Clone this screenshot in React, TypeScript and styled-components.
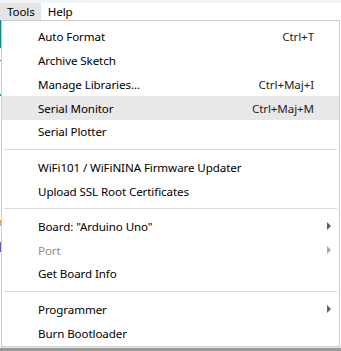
import React from "react";
import styled, { createGlobalStyle } from "styled-components";

const Global = createGlobalStyle`
  html, body { margin: 0; padding: 0; background: #ffffff; }
  body { font-family: "Noto Sans", "Open Sans", sans-serif; }
`;

const Screen = styled.div`
  position: relative;
  width: 341px;
  height: 351px;
  overflow: hidden;
  background: #ffffff;
  display: flex;
  flex-direction: column;
`;

const MenuBar = styled.div`
  height: 17px;
  border-top: 3px solid #f1f3f8;
  background: #ffffff;
  display: flex;
  align-items: stretch;
  flex-shrink: 0;
`;

const BarItem = styled.div<{ $active?: boolean }>`
  padding: 0 6px 0 7px;
  display: flex;
  align-items: center;
  font-size: 11.6px;
  letter-spacing: -0.1px;
  color: #000;
  background: ${(p) => (p.$active ? "#e5e5e5" : "transparent")};
`;

const Editor = styled.div`
  flex: 1;
  display: flex;
  flex-direction: column;
  background: #ffffff;
`;

const EditorMain = styled.div`
  flex: 1;
  display: flex;
`;

const Gutter = styled.div`
  width: 1px;
  background: linear-gradient(
    to bottom,
    #0d8a8a 0px,
    #0d8a8a 28px,
    #ffffff 28px,
    #ffffff 40px,
    #777 40px,
    #777 41px,
    #fff 41px,
    #fff 74px,
    #1a9a9a 74px,
    #1a9a9a 76px,
    #fff 76px,
    #fff 200px,
    #e0a060 200px,
    #e0a060 206px,
    #fff 206px,
    #fff 222px,
    #5a60b0 222px,
    #5a60b0 232px,
    #fff 232px
  );
`;

const StatusStrip = styled.div`
  height: 3px;
  border-top: 1px solid #e8e8e8;
  background: #9a9a9a;
`;

const Dropdown = styled.div`
  position: absolute;
  top: 20px;
  left: 1px;
  width: 337px;
  border: 1px solid #cccccc;
  background: #ffffff;
  padding: 4px 0 1px;
  box-sizing: content-box;
  display: flex;
  flex-direction: column;
`;

const Item = styled.div<{ $hover?: boolean; $disabled?: boolean }>`
  height: 23.75px;
  display: flex;
  align-items: center;
  padding: 0 8px 0 36px;
  font-size: 11.6px;
  letter-spacing: -0.1px;
  color: ${(p) => (p.$disabled ? "#8d8d8d" : "#000000")};
  background: ${(p) => (p.$hover ? "#e8e8e8" : "transparent")};
`;

const Label = styled.span`
  flex: 1;
  white-space: nowrap;
`;

const Shortcut = styled.span`
  margin-right: 17px;
  color: #1e1e1e;
  white-space: nowrap;
`;

const Arrow = styled.span<{ $disabled?: boolean }>`
  width: 0;
  height: 0;
  border-top: 4px solid transparent;
  border-bottom: 4px solid transparent;
  border-left: 4px solid ${(p) => (p.$disabled ? "#a8a8a8" : "#606060")};
`;

const Separator = styled.div`
  height: 11.67px;
  display: flex;
  align-items: center;
  padding: 0 2px;
  &::after {
    content: "";
    flex: 1;
    height: 1px;
    background: #d9d9d9;
  }
`;

type Entry =
  | { kind: "item"; label: string; shortcut?: string; sub?: boolean; hover?: boolean; disabled?: boolean }
  | { kind: "sep" };

const entries: Entry[] = [
  { kind: "item", label: "Auto Format", shortcut: "Ctrl+T" },
  { kind: "item", label: "Archive Sketch" },
  { kind: "item", label: "Manage Libraries...", shortcut: "Ctrl+Maj+I" },
  { kind: "item", label: "Serial Monitor", shortcut: "Ctrl+Maj+M", hover: true },
  { kind: "item", label: "Serial Plotter" },
  { kind: "sep" },
  { kind: "item", label: "WiFi101 / WiFiNINA Firmware Updater" },
  { kind: "item", label: "Upload SSL Root Certificates" },
  { kind: "sep" },
  { kind: "item", label: "Board: \"Arduino Uno\"", sub: true },
  { kind: "item", label: "Port", sub: true, disabled: true },
  { kind: "item", label: "Get Board Info" },
  { kind: "sep" },
  { kind: "item", label: "Programmer", sub: true },
  { kind: "item", label: "Burn Bootloader" },
];

export default function App() {
  return (
    <>
      <Global />
      <Screen>
        <MenuBar>
          <BarItem $active>Tools</BarItem>
          <BarItem>Help</BarItem>
        </MenuBar>
        <Editor>
          <EditorMain>
            <Gutter />
          </EditorMain>
          <StatusStrip />
        </Editor>
        <Dropdown>
          {entries.map((e, i) =>
            e.kind === "sep" ? (
              <Separator key={i} />
            ) : (
              <Item key={i} $hover={e.hover} $disabled={e.disabled}>
                <Label>{e.label}</Label>
                {e.shortcut && <Shortcut>{e.shortcut}</Shortcut>}
                {e.sub && <Arrow $disabled={e.disabled} />}
              </Item>
            )
          )}
        </Dropdown>
      </Screen>
    </>
  );
}
